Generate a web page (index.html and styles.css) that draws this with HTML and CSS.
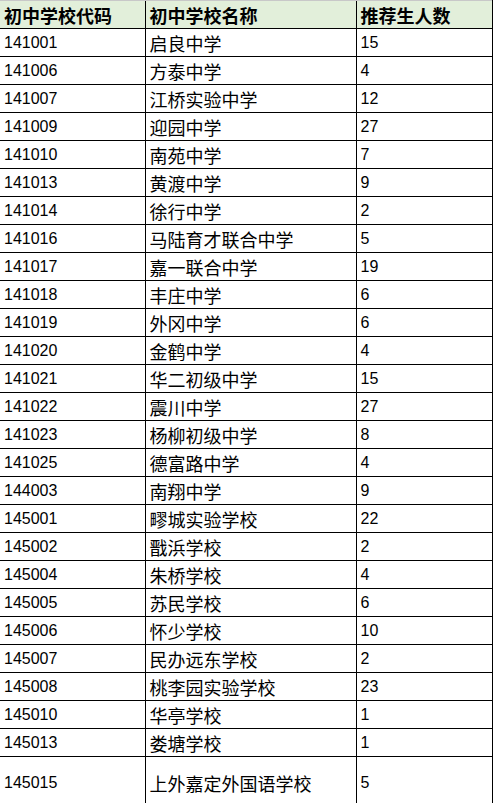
FILE: index.html
```html
<!DOCTYPE html>
<html lang="zh">
<head>
<meta charset="utf-8">
<title>推荐生人数</title>
<link rel="stylesheet" href="styles.css">
</head>
<body>
<table class="sheet">
  <colgroup><col class="c1"><col class="c2"><col class="c3"></colgroup>
  <thead>
    <tr><th>初中学校代码</th><th>初中学校名称</th><th>推荐生人数</th></tr>
  </thead>
  <tbody>
    <tr><td class="num">141001</td><td>启良中学</td><td class="num">15</td></tr>
    <tr><td class="num">141006</td><td>方泰中学</td><td class="num">4</td></tr>
    <tr><td class="num">141007</td><td>江桥实验中学</td><td class="num">12</td></tr>
    <tr><td class="num">141009</td><td>迎园中学</td><td class="num">27</td></tr>
    <tr><td class="num">141010</td><td>南苑中学</td><td class="num">7</td></tr>
    <tr><td class="num">141013</td><td>黄渡中学</td><td class="num">9</td></tr>
    <tr><td class="num">141014</td><td>徐行中学</td><td class="num">2</td></tr>
    <tr><td class="num">141016</td><td>马陆育才联合中学</td><td class="num">5</td></tr>
    <tr><td class="num">141017</td><td>嘉一联合中学</td><td class="num">19</td></tr>
    <tr><td class="num">141018</td><td>丰庄中学</td><td class="num">6</td></tr>
    <tr><td class="num">141019</td><td>外冈中学</td><td class="num">6</td></tr>
    <tr><td class="num">141020</td><td>金鹤中学</td><td class="num">4</td></tr>
    <tr><td class="num">141021</td><td>华二初级中学</td><td class="num">15</td></tr>
    <tr><td class="num">141022</td><td>震川中学</td><td class="num">27</td></tr>
    <tr><td class="num">141023</td><td>杨柳初级中学</td><td class="num">8</td></tr>
    <tr><td class="num">141025</td><td>德富路中学</td><td class="num">4</td></tr>
    <tr><td class="num">144003</td><td>南翔中学</td><td class="num">9</td></tr>
    <tr><td class="num">145001</td><td>疁城实验学校</td><td class="num">22</td></tr>
    <tr><td class="num">145002</td><td>戬浜学校</td><td class="num">2</td></tr>
    <tr><td class="num">145004</td><td>朱桥学校</td><td class="num">4</td></tr>
    <tr><td class="num">145005</td><td>苏民学校</td><td class="num">6</td></tr>
    <tr><td class="num">145006</td><td>怀少学校</td><td class="num">10</td></tr>
    <tr><td class="num">145007</td><td>民办远东学校</td><td class="num">2</td></tr>
    <tr><td class="num">145008</td><td>桃李园实验学校</td><td class="num">23</td></tr>
    <tr><td class="num">145010</td><td>华亭学校</td><td class="num">1</td></tr>
    <tr><td class="num">145013</td><td>娄塘学校</td><td class="num">1</td></tr>
    <tr class="tall"><td class="num">145015</td><td>上外嘉定外国语学校</td><td class="num">5</td></tr>
  </tbody>
</table>
</body>
</html>
```
FILE: styles.css
```css
html, body {
  margin: 0;
  padding: 0;
  background: #ffffff;
}
.sheet {
  border-collapse: collapse;
  table-layout: fixed;
  width: 492px;
  font-family: "Noto Sans CJK SC", "Liberation Sans", sans-serif;
  color: #000;
}
.sheet .c1 { width: 145px; }
.sheet .c2 { width: 211px; }
.sheet .c3 { width: 136px; }
.sheet th, .sheet td {
  height: 27px;
  padding: 0 0 0 4px;
  border-bottom: 1px solid #000;
  text-align: left;
  vertical-align: middle;
  font-size: 18px;
  line-height: 20px;
  white-space: nowrap;
  overflow: hidden;
}
.sheet th {
  background: #e2efda;
  font-weight: bold;
  border-top: 1px solid #c8c8c8;
}
.sheet th + th, .sheet td + td {
  border-left: 1px solid #000;
}
.sheet th:last-child, .sheet td:last-child {
  border-right: 1px solid #000;
}
.sheet td.num {
  font-family: "Liberation Sans", sans-serif;
  font-size: 16px;
}
.sheet tr.tall td {
  height: 44px;
  padding-top: 4px;
}
```
